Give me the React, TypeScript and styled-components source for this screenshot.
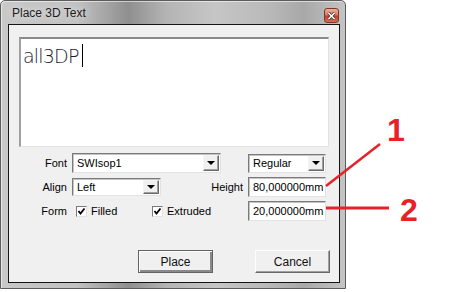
import React from "react";
import styled, { createGlobalStyle } from "styled-components";

const GlobalStyle = createGlobalStyle`
  html, body {
    margin: 0;
    padding: 0;
    background: #ffffff;
  }
  body {
    font-family: "Liberation Sans", Arial, sans-serif;
    font-size: 11px;
    color: #000;
  }
`;

const Stage = styled.div`
  position: relative;
  width: 456px;
  height: 292px;
  overflow: hidden;
`;

const Window = styled.div`
  width: 346px;
  height: 289px;
  box-sizing: border-box;
  border: 1px solid #5c5c5c;
  border-radius: 5px 5px 0 0;
  padding: 0 5px 5px 7px;
  display: flex;
  flex-direction: column;
  background: linear-gradient(
    90deg,
    #c8c8c8 0%,
    #c2c2c2 22%,
    #8f8f8f 37%,
    #b4b4b4 48%,
    #c6c6c6 62%,
    #b9b9b9 78%,
    #a8a8a8 88%,
    #c4c4c4 100%
  );
  box-shadow: inset 1px 1px 0 rgba(255, 255, 255, 0.55);
`;

const TitleBar = styled.div`
  height: 23px;
  display: flex;
  align-items: center;
  justify-content: space-between;
  padding-left: 4px;
`;

const Title = styled.span`
  font-family: "Liberation Sans", Arial, sans-serif;
  font-size: 12px;
  color: #1c1c1c;
  text-shadow: 0 0 6px rgba(255, 255, 255, 0.8);
`;

const CloseButton = styled.div`
  width: 15px;
  height: 15px;
  margin-right: 1px;
  margin-top: 6px;
  box-sizing: border-box;
  border: 1px solid #7a3a2a;
  border-radius: 3px;
  background: linear-gradient(180deg, #eab3a0 0%, #d97a60 45%, #c0412a 55%, #d4705a 100%);
  display: flex;
  align-items: center;
  justify-content: center;
`;

const Client = styled.div`
  flex: 1;
  box-sizing: border-box;
  border: 1px solid #141414;
  background: #f0f0f0;
  padding: 12px 0 0 10px;
  display: flex;
  flex-direction: column;
`;

const TextArea = styled.div`
  width: 310px;
  height: 110px;
  box-sizing: border-box;
  background: #ffffff;
  border-style: solid;
  border-width: 2px 1px 1px 2px;
  border-color: #8a8a8a #e3e3e3 #e3e3e3 #a0a0a0;
  padding: 5px 0 0 2px;
  display: flex;
  align-items: flex-start;
`;

const BigText = styled.span`
  font-family: "DejaVu Sans", sans-serif;
  font-weight: 200;
  font-size: 19px;
  letter-spacing: -0.8px;
  color: #1a1a2a;
  line-height: 24px;
`;

const Caret = styled.span`
  display: inline-block;
  width: 1px;
  height: 23px;
  margin-left: 3px;
  background: #000;
`;

const Form = styled.div`
  margin-top: 6px;
  display: grid;
  grid-template-columns: 48px 171px 78px;
  grid-auto-rows: 20px;
  column-gap: 5px;
  row-gap: 4px;
`;

const Label = styled.span`
  display: flex;
  align-items: center;
  justify-content: flex-end;
  font-size: 11px;
`;

const Cell = styled.div<{ $spread?: boolean }>`
  display: flex;
  align-items: center;
  justify-content: ${(p) => (p.$spread ? "space-between" : "flex-start")};
`;

const Sunken = styled.div<{ $w: number; $h: number }>`
  width: ${(p) => p.$w}px;
  height: ${(p) => p.$h}px;
  box-sizing: border-box;
  background: #ffffff;
  border-style: solid;
  border-width: 1px;
  border-color: #7a7a7a #e3e3e3 #e3e3e3 #7a7a7a;
  box-shadow: inset 1px 1px 0 #c4c4c4;
  display: flex;
  align-items: center;
  padding-left: 4px;
  font-size: 11px;
  position: relative;
`;

const ComboText = styled.span`
  flex: 1;
`;

const DropButton = styled.div`
  width: 16px;
  height: calc(100% - 2px);
  margin-right: 1px;
  box-sizing: border-box;
  background: #f0f0f0;
  border-style: solid;
  border-width: 1px;
  border-color: #f4f4f4 #6a6a6a #6a6a6a #f4f4f4;
  box-shadow: inset -1px -1px 0 #a0a0a0;
  display: flex;
  align-items: center;
  justify-content: center;
`;

const Arrow = styled.span`
  width: 0;
  height: 0;
  border-left: 4px solid transparent;
  border-right: 4px solid transparent;
  border-top: 4px solid #000;
`;

const Check = styled.span`
  width: 11px;
  height: 11px;
  box-sizing: border-box;
  background: #fff;
  border-style: solid;
  border-width: 1px;
  border-color: #7a7a7a #e3e3e3 #e3e3e3 #7a7a7a;
  display: inline-flex;
  align-items: center;
  justify-content: center;
`;

const CheckItem = styled.label<{ $w: number; $indent?: number }>`
  display: inline-flex;
  align-items: center;
  gap: 4px;
  width: ${(p) => p.$w}px;
  margin-left: ${(p) => p.$indent ?? 0}px;
  font-size: 11px;
`;

const ButtonRow = styled.div`
  margin-top: 29px;
  display: flex;
  justify-content: flex-end;
  gap: 42px;
  padding-right: 9px;
`;

const PushButton = styled.div<{ $default?: boolean }>`
  width: 75px;
  height: 23px;
  box-sizing: border-box;
  background: #f0f0f0;
  border-style: solid;
  border-width: 1px;
  border-color: ${(p) => (p.$default ? "#646464" : "#fdfdfd #696969 #696969 #fdfdfd")};
  box-shadow: ${(p) =>
    p.$default
      ? "inset 1px 1px 0 #fdfdfd, inset -2px -2px 0 #8a8a8a"
      : "inset -1px -1px 0 #a0a0a0"};
  display: flex;
  align-items: center;
  justify-content: center;
  font-size: 12px;
  color: #111;
`;

const Number = styled.span<{ $x: number; $y: number }>`
  position: absolute;
  left: ${(p) => p.$x}px;
  top: ${(p) => p.$y}px;
  font-family: "Liberation Sans", Arial, sans-serif;
  font-weight: bold;
  font-size: 32px;
  line-height: 32px;
  color: #e5222a;
`;

const Leaders = styled.svg`
  position: absolute;
  left: 0;
  top: 0;
  pointer-events: none;
`;

const Combo = ({ w, h, text }: { w: number; h: number; text: string }) => (
  <Sunken $w={w} $h={h}>
    <ComboText>{text}</ComboText>
    <DropButton>
      <Arrow />
    </DropButton>
  </Sunken>
);

const Tick = () => (
  <svg width="9" height="9" viewBox="0 0 9 9">
    <path d="M1.5 4 L3.5 6.5 L7.5 1.5" fill="none" stroke="#000" strokeWidth="1.8" />
  </svg>
);

const App = () => {
  return (
    <Stage>
      <GlobalStyle />
      <Window>
        <TitleBar>
          <Title>Place 3D Text</Title>
          <CloseButton>
            <svg width="9" height="8" viewBox="0 0 9 8">
              <path d="M1.5 1 L7.5 7 M7.5 1 L1.5 7" stroke="#3a2a2a" strokeWidth="3" />
              <path d="M1.5 1 L7.5 7 M7.5 1 L1.5 7" stroke="#fff" strokeWidth="1.6" />
            </svg>
          </CloseButton>
        </TitleBar>
        <Client>
          <TextArea>
            <BigText>all3DP</BigText>
            <Caret />
          </TextArea>
          <Form>
            <Label>Font</Label>
            <Cell>
              <Combo w={149} h={20} text="SWIsop1" />
            </Cell>
            <Cell>
              <Combo w={78} h={19} text="Regular" />
            </Cell>

            <Label>Align</Label>
            <Cell $spread>
              <Combo w={89} h={18} text="Left" />
              <Label>Height</Label>
            </Cell>
            <Cell>
              <Sunken $w={79} $h={20}>80,000000mm</Sunken>
            </Cell>

            <Label>Form</Label>
            <Cell>
              <CheckItem $w={76} $indent={4}>
                <Check>
                  <Tick />
                </Check>
                Filled
              </CheckItem>
              <CheckItem $w={80}>
                <Check>
                  <Tick />
                </Check>
                Extruded
              </CheckItem>
            </Cell>
            <Cell>
              <Sunken $w={79} $h={20}>20,000000mm</Sunken>
            </Cell>
          </Form>
          <ButtonRow>
            <PushButton $default>Place</PushButton>
            <PushButton>Cancel</PushButton>
          </ButtonRow>
        </Client>
      </Window>
      <Leaders width="456" height="292">
        <line x1="326" y1="186" x2="380" y2="144" stroke="#e5222a" strokeWidth="2.5" />
        <line x1="326" y1="208" x2="389" y2="208" stroke="#e5222a" strokeWidth="3" />
      </Leaders>
      <Number $x={387} $y={114}>1</Number>
      <Number $x={400} $y={194}>2</Number>
    </Stage>
  );
};

export default App;
